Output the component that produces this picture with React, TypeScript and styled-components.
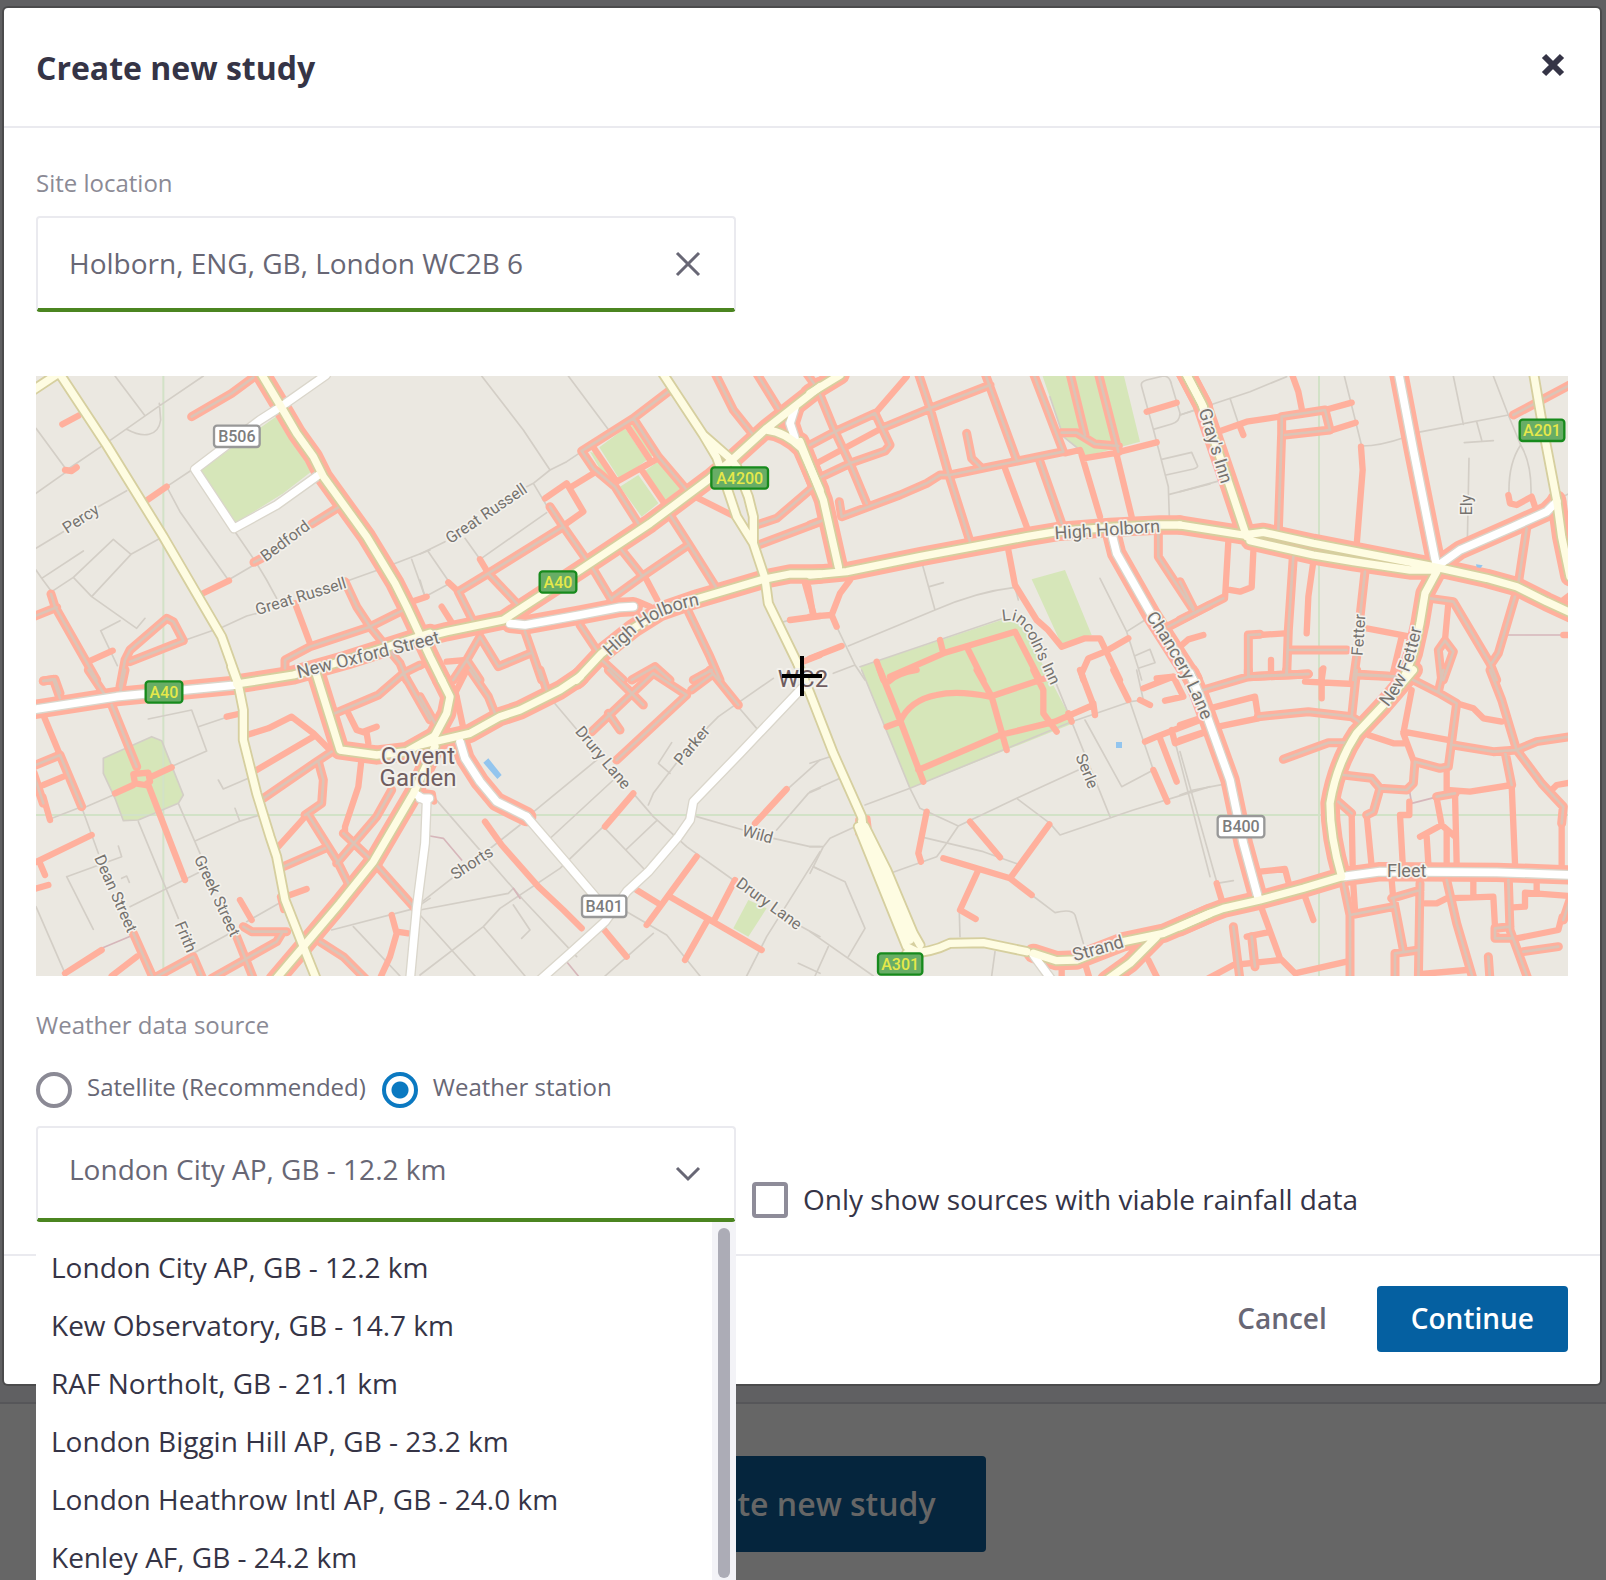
import React, { useState } from "react";
import styled, { createGlobalStyle } from "styled-components";

const colors = {
  ink: "#353446",
  text: "#686775",
  muted: "#8b8a95",
  line: "#eaeaef",
  green: "#4b8520",
  blue: "#0b79c1",
  primary: "#0560a1",
};

const GlobalStyle = createGlobalStyle`
  *, *::before, *::after { box-sizing: border-box; }
  body {
    margin: 0;
    font-family: "Open Sans", "Noto Sans", sans-serif;
    color: ${colors.ink};
  }
  button, input, select { font: inherit; color: inherit; margin: 0; }
`;

/* ---------- page behind the dialog ---------- */

const Screen = styled.div`
  display: grid;
  grid-template-columns: minmax(0, 1fr);
  height: 100vh;
  overflow: hidden;
`;

const Backdrop = styled.div`
  grid-area: 1 / 1;
  display: flex;
  flex-direction: column;
  background: #606062;
`;

const BackdropFooter = styled.div`
  display: flex;
  justify-content: center;
  margin-top: auto;
  padding: 52px 4px 28px 0;
  border-top: 2px solid #565659;
  background: #666666;
`;

const DimmedButton = styled.button`
  && {
    height: 96px;
    padding: 0 50px 2px;
    border: 0;
    border-radius: 4px;
    background: #05253d;
    color: #666666;
    font-size: 32px;
    font-weight: 600;
  }
`;

/* ---------- dialog ---------- */

const Dialog = styled.section`
  grid-area: 1 / 1;
  align-self: start;
  margin: 8px 6px 0 4px;
  border-radius: 4px;
  background: #ffffff;
  box-shadow: 0 0 0 2px #4b4b4c;
`;

const Header = styled.header`
  display: flex;
  align-items: center;
  justify-content: space-between;
  height: 120px;
  padding: 0 32px;
  border-bottom: 2px solid ${colors.line};
`;

const Title = styled.h1`
  margin: 0;
  padding-top: 2px;
  font-size: 32px;
  line-height: 44px;
  font-weight: 700;
`;

const IconButton = styled.button`
  display: flex;
  padding: 0 3px 4px;
  border: 0;
  background: none;
  color: ${colors.ink};
  cursor: pointer;
`;

const Body = styled.div`
  display: flex;
  flex-direction: column;
  padding: 40px 32px 32px;
`;

const fieldLabel = `
  padding: 0;
  color: ${colors.muted};
  font-size: 24px;
  line-height: 30px;
`;

const Label = styled.label`
  ${fieldLabel}
  margin-bottom: 18px;
`;

const FieldBox = styled.div`
  position: relative;
  flex: none;
  width: 700px;
  max-width: 100%;
`;

const control = `
  display: block;
  width: 100%;
  height: 96px;
  border: 2px solid ${colors.line};
  border-bottom: 4px solid ${colors.green};
  border-radius: 4px;
  background: #ffffff;
  color: ${colors.text};
  font-size: 28px;
  outline: none;
`;

const TextInput = styled.input`
  && { ${control} }
  padding: 0 80px 0 31px;
`;

const Select = styled.select`
  && { ${control} }
  appearance: none;
  padding: 0 80px 8px 31px;
`;

const ClearButton = styled.button`
  position: absolute;
  top: 34px;
  right: 34px;
  display: flex;
  padding: 0;
  border: 0;
  background: none;
  color: ${colors.text};
`;

const Chevron = styled.svg`
  position: absolute;
  top: 39px;
  right: 34px;
  pointer-events: none;
`;

const MapFrame = styled.div`
  height: 600px;
  margin: 64px 0 34px;
  overflow: hidden;
  background: #ebe8e1;
  svg { display: block; width: 100%; height: 100%; }
`;

const RadioGroup = styled.fieldset`
  display: flex;
  flex-wrap: wrap;
  gap: 16px;
  margin: 0 0 18px;
  padding: 0;
  border: 0;
`;

const Legend = styled.legend`
  ${fieldLabel}
  margin-bottom: 32px;
`;

const RadioLabel = styled.label`
  display: flex;
  gap: 15px;
  color: ${colors.text};
  font-size: 24px;
  line-height: 30px;
`;

const Radio = styled.input`
  && {
    appearance: none;
    flex: none;
    width: 36px;
    height: 36px;
    border: 4px solid ${colors.muted};
    border-radius: 50%;
    background: #ffffff;
  }
  &&:checked {
    border-color: ${colors.blue};
    background: radial-gradient(circle, ${colors.blue} 8px, #ffffff 9px);
  }
`;

const SourceRow = styled.div`
  display: flex;
  align-items: flex-end;
  gap: 16px;
`;

const CheckLabel = styled.label`
  display: flex;
  gap: 15px;
  padding-bottom: 4px;
  font-size: 28px;
  line-height: 34px;
`;

const Checkbox = styled.input`
  && {
    appearance: none;
    flex: none;
    width: 36px;
    height: 36px;
    border: 4px solid #8e8c99;
    border-radius: 4px;
    background: #ffffff;
  }
  &&:checked { background: ${colors.blue}; }
`;

const Menu = styled.div`
  position: absolute;
  top: 100%;
  left: 0;
  right: 0;
  z-index: 1;
  display: flex;
  height: 358px;
  overflow: hidden;
  background: #ffffff;
`;

const Options = styled.ul`
  flex: 1;
  margin: 0;
  padding: 16px 0 0;
  list-style: none;
`;

const Option = styled.li`
  padding: 0 15px;
  font-size: 28px;
  line-height: 58px;
`;

const ScrollTrack = styled.div`
  width: 24px;
  padding: 6px 6px 2px;
  background: #f3f3f7;
`;

const ScrollThumb = styled.div`
  height: 100%;
  border-radius: 6px;
  background: #acacb6;
`;

const Footer = styled.footer`
  display: flex;
  justify-content: flex-end;
  gap: 16px;
  padding: 30px 32px 32px;
  border-top: 2px solid ${colors.line};
`;

const Button = styled.button<{ $primary?: boolean }>`
  && {
    height: 66px;
    padding: 0 34px 3px;
    border: 0;
    border-radius: 4px;
    background: ${(p) => (p.$primary ? colors.primary : "transparent")};
    color: ${(p) => (p.$primary ? "#ffffff" : colors.text)};
    font-size: 28px;
    font-weight: 600;
  }
`;

/* ---------- map drawing, three units to a pixel ---------- */

type Tile = {
  x: number;
  y: number;
  park?: string;
  minor?: string;
  path?: string;
  street?: string;
  coral?: string;
  yellow?: string;
  yellowLit?: string;
  white?: string;
  whiteLit?: string;
};

const tiles: Tile[] = [
  {
    x: -18,
    y: -18,
    park: "M512,300L745,135L850,300L760,370L615,460Z",
    minor:
      "M255,18L345,137M18,175L110,300L235,215L385,110L520,18M290,178C340,205 385,200 392,150L388,100M18,370L110,305M18,535L100,485M205,410L290,362M410,350L485,300M410,350L450,425L595,630L680,580M615,485L680,580L710,630L740,685M18,600L35,625L160,543M35,625L65,665L130,622L250,508L303,553L185,680L130,622M303,553L385,508M185,680L320,775L345,745M270,752L212,782L262,887M460,812L580,770L650,738L680,730M945,635L1050,598L1200,540M1145,568L1185,680",
    coral:
      "M97,163L145,137M105,300L125,303L140,292M345,395L410,350M515,672L597,632M795,700L840,820M1145,695L1190,680M175,875L248,842",
    street:
      "M485,140L605,70L670,22M845,462L925,412M672,577L695,565M63,672L75,710L200,930M10,740L80,712M270,950L285,870L300,840L410,745L430,755L460,812L300,875M945,635L980,710L1020,770L1110,880L1130,930M765,895L765,870L840,830L1020,770L1140,710M40,933L75,928L90,970",
    yellow: "M10,60L85,10M85,5L230,225L400,500L575,800L625,940",
    yellowLit: "M690,5L750,105L800,190L850,260L880,320L1010,500L1095,640L1130,710L1200,860L1235,930",
    white: "M888,15L750,112L690,150L495,298L612,475L740,405L870,312",
  },
  {
    x: 1152,
    y: -18,
    park: "M538,232L615,175L680,270L600,330ZM600,350L655,315L715,400L665,440ZM672,305L720,270L782,355L735,392ZM628,158L645,158L705,255L690,262ZM510,245L525,250L575,325L550,315Z",
    minor:
      "M185,18L310,180L390,300L340,340L320,350M445,18L570,185M390,300L440,275L485,245M340,340L385,415M0,552L75,515M25,545L90,640L15,680L0,630M135,505L180,568L380,428M1085,757L1110,750",
    coral:
      "M375,385L440,340L490,425L440,460M455,350L520,310M180,568L205,610M85,637L115,665M65,710L100,765M520,232L590,335L710,268M620,165L690,270M665,300L730,395M675,620L712,690M825,380L945,440M80,875L140,870M0,890L40,870M1155,640L1180,730M1110,750L1200,738M1150,875L1200,855M585,692L655,695L690,710",
    street:
      "M745,65L640,145L485,243L520,295L585,350L655,460M640,145L715,260L800,360M390,410L430,470L500,570M430,470L205,610L115,665L160,755M205,610L290,700M515,590L575,690M605,540L665,615M575,685L665,620L805,525M750,435L805,520L890,655M885,10L940,120L1000,195M1010,10L1075,115M1160,10L1185,45M1010,465L1070,445L1175,355M1015,525L1200,455M805,725L870,860L900,930M100,930L140,870L180,800L235,890L330,850M315,785L365,930M140,870L180,930M545,870L610,930M635,930L705,890L750,930M820,930L875,900M480,765L530,840",
    yellow:
      "M725,5L850,195L890,262L930,380L950,440L1000,520L1035,625L1045,700L1135,885M850,195L930,265L950,290L985,380L1000,440L1000,520",
    yellowLit:
      "M0,805L80,785L250,750L480,600L690,460L870,325L930,275L1040,175L1200,50M470,930L545,850L640,775L720,725L820,690L1030,628L1110,612L1200,612M1040,180C1085,185 1120,210 1145,235L1200,360",
    whiteLit: "M270,760L315,765L480,735L600,712L640,710M1125,112L1110,160L1125,205",
  },
  {
    x: 2322,
    y: -18,
    park: "M695,10L940,10L990,215L830,258L760,200ZM665,628L765,600L845,795L755,825ZM150,890L620,735L790,1060L300,1255Z",
    minor:
      "M720,80L760,200L810,240M995,50Q990,35 1010,30L1060,18Q1080,18 1085,45L1110,130Q1110,155 1085,162L1030,178ZM1030,178L1075,350L1078,440M1110,135L1150,122M1055,268L1145,247L1163,288Q1163,293 1150,297L1068,315M1078,373L1200,342M335,575L375,720M358,650L400,638M115,828L375,720Q500,665 615,652L625,690M80,770L135,885L70,910M135,885L165,930M150,890L580,745M870,625L950,785L1005,750M950,785L985,895L995,930M975,857L1020,838L1035,878L985,895",
    coral:
      "M195,130L290,20M20,280L215,175M585,295L650,470M815,255L870,440M920,255L965,440M1010,125L1100,98M765,250L810,240L820,265L910,250L1040,217M595,540L615,645L680,750L712,778L755,830L825,805L870,805L930,930M885,845L955,805M885,845L835,865L815,910L820,930M120,630L90,670L65,735L0,740M65,735L80,770M-5,650L10,740M0,865L95,828M1110,830L1135,808L1180,795M200,875L220,930M240,920L400,850L615,785L690,930M390,810L400,850M475,840L520,930M1040,925L1090,920",
    street:
      "M30,75L75,185M0,225L75,185L195,130L240,225L225,243L120,280L25,325M215,175L360,115L540,45M325,10L360,115L415,310L480,515M525,10L620,270M670,10L760,245L420,315L390,315L350,340L270,375L95,440L88,395M75,185L120,280L170,400M470,190L485,265L510,290M690,275L755,460M780,10L825,195M865,10L925,245M755,188L800,188L855,222L925,228M1045,490L1045,560L1150,720M1075,770L1200,705M0,465L40,450",
    yellowLit:
      "M0,70L90,15M-30,215L0,290L40,390L85,590M0,615L110,605L330,560L650,500L740,485L900,472L1050,465L1110,465M1125,5L1180,110",
    whiteLit: "M905,490L920,550L1025,735L1150,930",
  },
  {
    x: 3432,
    y: -18,
    minor:
      "M0,135L210,65L320,20M150,85L180,175M493,18L545,228Q600,228 680,200M710,188L985,135L940,18M820,18L850,163M890,155L905,210M853,218L940,212M985,135L1022,225Q985,280 987,370M1022,225Q1055,280 1053,370M867,265L862,515M0,365L120,332M1140,385L1165,372",
    path: "M975,795L1170,795",
    coral:
      "M335,10L355,65L365,115M115,185L200,155L300,140M180,170L190,195M435,120L515,98M450,182L527,158M543,230L548,300L530,525M145,515L135,685M140,658L180,665L215,652L220,545M400,575L385,680L380,790M240,795L315,790M273,870L273,915M430,895L425,930M560,775L690,800M665,800L635,925M985,375L990,400L1010,405L1055,380L1065,410M805,700L795,810M1150,795L1170,795M1150,690L1170,675",
    street:
      "M1000,135L1175,42M305,140L305,190L295,480M305,140L435,120L450,180L315,195M340,560L325,780L320,915M330,840L500,840M555,605L540,740M530,860L520,930M750,685L820,695L930,880L950,930M935,880L955,850L1005,680M1015,640L1040,475M205,920L205,795L240,793M205,920L385,912M0,635L40,715M0,750L130,685M530,915L650,920M795,812L775,840L785,930M795,812L820,845L790,930",
    yellow: "M1060,5L1090,180L1130,390",
    yellowLit:
      "M15,5L65,100L150,350L200,500M0,465L190,495L250,487L400,520L760,590L920,625L1010,650L1100,695L1180,732M210,512L400,555L520,575L690,600L760,600M770,605L735,670L720,760L700,850L670,930M1130,390L1145,500L1170,620",
    whiteLit: "M655,5L700,240L770,590M770,590L840,540L1000,470L1100,425L1130,395",
  },
  {
    x: -18,
    y: 882,
    park: "M220,265L365,200L395,212L460,375L445,400L325,450L280,452L255,385L220,310Z",
    minor:
      "M220,265L365,200L395,212L460,375L445,400L325,450L280,452L255,385L220,310ZM355,147L485,120L530,243L430,287M505,170L590,142M158,415L250,375M60,447L155,410M158,420L205,550M325,455L445,745M445,400L510,550M495,513L625,455L690,435M565,330L580,357L655,325M615,415L628,450M110,620L275,560L265,528M110,620L190,778M275,625L290,618L298,637M300,710L505,608M18,710L105,910M490,850L600,790M905,780L1155,715L1200,685M970,770L1110,918M650,755L755,695",
    path: "M215,835L310,795",
    coral:
      "M40,135L90,255M40,345L100,320M40,380L60,450M10,580L185,495M30,580L45,615M10,658L55,645M255,370L310,345M365,320L425,292M310,312L355,308L360,335L345,345L315,340ZM355,345L465,630M590,140L625,132M650,195L715,175L785,140L850,190L900,240M680,300L850,200M745,530L830,435M780,675L830,657M630,690L665,750M105,910L215,840M245,918L320,860M955,130L980,180L1010,190L1015,220M1000,185L1040,170M993,280L985,350L945,470L945,490M1085,735L1100,790L1080,860L1050,925M1100,785L1135,790M750,680L760,720",
    street:
      "M175,0L225,75M285,0L270,70M40,33L70,28L90,85M245,105L320,290M10,288L90,255L155,410M10,310L40,400M700,385L860,275L905,245M865,275L880,330L875,400L825,435M835,435L920,570L960,650M760,590L885,535M920,580L1040,440L1085,360M940,490L1030,575L1155,715M915,130L1045,75L1120,10L1200,150M1120,10L1170,-15M640,770L665,785L770,785M545,925L740,815L755,790M620,800L670,925M310,790L370,925M370,925L490,860L520,930M870,815L940,860L1010,930",
    yellow: "M605,-10L625,45L640,120L640,210L680,370L720,500L740,560L765,690L820,830L860,930",
    yellowLit:
      "M620,42L790,15L950,-30L1200,-110M855,0L930,240L1040,255L1130,245L1210,200M1215,230L1150,370L1030,575L930,700L820,830L735,930",
    white: "M1155,370L1190,395L1185,520L1160,715L1140,930",
    whiteLit: "M-10,122L260,80L620,45",
  },
  {
    x: 1152,
    y: 882,
    park: "M940,775L985,690L1040,715L985,800Z",
    minor:
      "M400,95L480,190M640,370L700,440L800,530L940,630M530,270L335,430M580,330L385,510M550,470L420,595L240,715L190,770L0,915M555,475L675,600M710,452L617,540M0,700L300,465M45,385L310,690L470,860M0,720L265,670L280,655M0,735L165,918M280,705L330,780L305,805M190,770L315,918M755,218L715,280L750,310M685,405L700,370L780,265M860,175L895,140L1060,25M950,105L1010,175M830,440L970,480M1060,505L1170,530L1200,530M1070,480L1165,370L1200,355M1105,355L1200,270M1200,545L1040,800L980,918M1145,770L1200,800M1180,590L1200,600M620,725L740,795L840,918M555,918L700,790M1135,880L1200,910",
    path: "M30,498L70,505L125,570M280,655L300,685M440,875L475,918",
    coral:
      "M640,370L555,470M1100,357L1005,460M195,455L245,525L355,650L430,720L485,775M545,770L620,860M650,660L715,700M830,560L680,765M750,680L1025,840M945,630L880,755M860,755L795,870M110,80L130,175M140,0L100,80M0,365L38,370L42,395",
    street:
      "M565,0L670,105M515,185L700,10L800,75L590,270M565,130L600,180M870,0L955,105M815,60L875,15M150,0L205,80L225,130M360,0L380,60M0,80L45,160",
    yellowLit: "M480,20L420,60L300,120L240,140L150,190L0,225M65,30L90,80L80,130L40,205",
    white: "M320,440L440,580L555,715M360,930L450,850L555,755L620,665L685,605L775,500L810,450L820,395L960,250L1145,55M0,385L28,385",
    whiteLit: "M120,215L135,265L180,335L230,395L320,440",
  },
  {
    x: 2322,
    y: 882,
    minor:
      "M155,0L300,355L785,155M300,355L165,405M300,355L330,415L445,468M445,468L410,520L380,560L245,608M330,500L520,545L625,583M445,468L620,385L805,300M620,385L720,460L750,495L970,420L1150,365L1200,350M0,280L60,260M0,365L90,325M0,530L40,530L60,505L140,468M40,530L0,610M10,590L105,635L165,775L115,860M0,785L190,918M55,830L15,918M730,20L785,155L900,440M785,155L960,95L1000,90L980,0M825,150L935,350L1030,300M960,95L1030,300M1095,215L1200,620M448,730L450,800M665,675L735,728Q785,715 795,735L820,820M555,845L545,918",
    coral:
      "M210,0L270,150L340,335M235,35Q260,10 320,0M230,170L270,155Q300,90 380,75Q440,60 540,80L720,20M500,0L545,80L590,240M325,300L570,195L735,155L850,105L810,0M670,0L700,60L700,130L740,185M775,130L785,155M850,100L855,135M910,0L955,90M990,90L1020,105M1000,55L1090,20L1120,80L1065,92M1005,215L1040,200L1170,150M1085,180L1095,220L1190,185M1050,205L1100,335M1030,300L1072,395M350,425L325,550L333,575M480,455L570,562M718,463L600,625M400,565L600,625L665,675M505,600L450,720L497,747M755,885L755,925M825,880L840,930M1015,870L1045,930M145,450L145,490M172,445L175,470",
    yellow: "M-35,-15L0,70L70,250L155,440L160,480M145,470L290,830L330,850M165,470L230,600L310,790L330,825M155,455L225,630L300,810M290,850Q360,850 420,820L520,818L650,845",
    yellowLit: "M670,850L740,872L800,870L940,815L1060,790L1200,730M1040,800L960,880L890,930",
    white: "M670,855L725,930",
  },
  {
    x: 3432,
    y: 882,
    minor: "M0,245L110,635M0,375L40,360L130,343M110,640L160,632",
    path: "M688,360L695,400L765,382",
    coral:
      "M90,115L225,80L235,145L115,170M0,165L60,145M0,210L75,185M425,0L425,85M375,35L520,42M695,60L670,190L700,270M565,195L640,220L680,220M670,185L815,212M830,100L880,115L910,145L965,155M800,300L800,360L870,365L995,345L1005,580M1110,365L1130,345L1170,338M1145,460L1145,590M515,430L518,590M560,435L575,590M688,395L688,435L660,435L668,580M825,370L830,580M770,385L785,465L720,500M740,500L745,580M785,465L825,500M800,480L800,580M240,605L315,597L325,635M110,640L125,690M375,680L400,750M245,715L300,865L345,910L500,875M85,925L160,885L300,870M200,800L260,788M520,645L525,720M635,630L640,690M735,700L770,700L800,685L940,680L945,770M880,635L880,680M1070,640L1070,665M1170,678L1035,668L1035,710L1000,712M1010,805L1135,780L1145,740M725,912L860,900",
    street:
      "M70,60L205,20L385,12M205,0L205,20M320,0L320,15M235,140L385,125L515,140L530,0M515,140L545,160M310,268L445,218L500,218M530,12L650,20M790,0L775,65M700,30L775,68L830,100L805,290L780,295L705,275L700,340L680,360L600,355M490,315L575,325L600,355L580,425L560,435M930,0L965,90L1010,240L1085,340L1150,410L1145,460M820,225L940,245L1010,240L1070,215L1170,200M975,245L995,345M475,395L515,430M490,640L510,735L510,930M510,735L640,710M720,640L715,930M635,685L720,660M640,685L670,840M645,930L645,850L715,840M800,630L830,760L880,930M985,630L990,780L1045,930M990,770L945,775L945,805L1000,805M1030,845L1135,830M925,860L930,930M160,770L180,930M215,800L225,890M770,380L825,370M1170,690L1150,750",
    yellowLit: "M700,0L610,105L530,190Q470,280 450,400Q450,500 485,620M90,730L130,715L240,690L370,655L485,620M0,770L90,730",
    whiteLit: "M490,620L600,605L950,607L1180,615M30,10L60,80L150,330L190,520L235,685",
  },
];

type LayerKey = Exclude<keyof Tile, "x" | "y">;

const layers: { keys: LayerKey[]; stroke: string; width: number }[] = [
  { keys: ["minor"], stroke: "#d3cec6", width: 5 },
  { keys: ["path"], stroke: "#d6b6ba", width: 5 },
  { keys: ["yellowLit", "whiteLit"], stroke: "#ffb09d", width: 58 },
  { keys: ["coral"], stroke: "#ffb09d", width: 19 },
  { keys: ["street"], stroke: "#ffb09d", width: 27 },
  { keys: ["street"], stroke: "#dcc4b6", width: 8 },
  { keys: ["white", "whiteLit"], stroke: "#dad6cb", width: 31 },
  { keys: ["yellow", "yellowLit"], stroke: "#d6cf9f", width: 33 },
  { keys: ["white", "whiteLit"], stroke: "#ffffff", width: 23 },
  { keys: ["yellow", "yellowLit"], stroke: "#fefce2", width: 22 },
];

const Street = styled.text`
  font-family: Roboto, "Open Sans", sans-serif;
  font-size: 48px;
  fill: #76736f;
  stroke: #f3f1ec;
  stroke-width: 10px;
  stroke-linejoin: round;
  paint-order: stroke;
`;

const Avenue = styled(Street)`
  font-size: 54px;
`;

const Place = styled(Street)`
  font-size: 72px;
  fill: #6f5d60;
  stroke-width: 12px;
  text-anchor: middle;
`;

const ShieldText = styled.text<{ $green: boolean }>`
  font-family: Roboto, "Open Sans", sans-serif;
  font-size: 48px;
  font-weight: 500;
  text-anchor: middle;
  fill: ${(p) => (p.$green ? "#e6e84a" : "#7d7d7d")};
`;

const straightLabels = [
  { text: "Percy", x: 134, y: 427, angle: -33 },
  { text: "Bedford", x: 747, y: 494, angle: -37 },
  { text: "Great Russell", x: 794, y: 660, angle: -17 },
  { text: "Great Russell", x: 1350, y: 412, angle: -34 },
  { text: "Ely", x: 4292, y: 387, angle: -90 },
  { text: "Fetter", x: 3967, y: 777, angle: -86 },
  { text: "Dean Street", x: 240, y: 1552, angle: 66 },
  { text: "Greek Street", x: 544, y: 1559, angle: 65 },
  { text: "Frith", x: 450, y: 1682, angle: 67 },
  { text: "Drury Lane", x: 1702, y: 1144, angle: 50 },
  { text: "Parker", x: 1967, y: 1107, angle: -50 },
  { text: "Wild", x: 2165, y: 1374, angle: 15 },
  { text: "Drury Lane", x: 2200, y: 1582, angle: 36 },
  { text: "Shorts", x: 1307, y: 1460, angle: -33 },
  { text: "Serle", x: 3154, y: 1185, angle: 68 },
];

const avenueLabels = [
  { text: "New Oxford Street", x: 997, y: 839, angle: -14 },
  { text: "High Holborn", x: 3214, y: 464, angle: -4 },
  { text: "Gray's Inn", x: 3536, y: 210, angle: 73 },
  { text: "Strand", x: 3187, y: 1720, angle: -16 },
  { text: "Fleet", x: 4112, y: 1487, angle: 0 },
];

const curvedLabels = [
  { id: "holborn", text: "High Holborn", d: "M1722,842L1800,770Q1880,704 2010,684" },
  { id: "lincoln", text: "Lincoln's Inn", d: "M2900,736Q2945,722 2972,772L3050,940" },
  { id: "chancery", text: "Chancery Lane", d: "M3328,722Q3440,880 3500,1040L3530,1120" },
  { id: "fetter", text: "New Fetter", d: "M4056,994Q4135,905 4165,710" },
];

const shields = [
  { text: "B506", x: 530, y: 145, w: 145 },
  { text: "A4200", x: 2022, y: 270, w: 178 },
  { text: "A40", x: 1507, y: 582, w: 118 },
  { text: "A201", x: 4447, y: 127, w: 142 },
  { text: "A40", x: 325, y: 912, w: 118 },
  { text: "B401", x: 1634, y: 1555, w: 141 },
  { text: "A301", x: 2522, y: 1728, w: 141 },
  { text: "B400", x: 3541, y: 1316, w: 148 },
];

const shift = (t: Tile) => `translate(${t.x} ${t.y})`;

function LocationMap() {
  return (
    <MapFrame>
      <svg viewBox="0 0 4596 1800" preserveAspectRatio="xMidYMid slice" role="img" aria-label="Map of the site location">
        {tiles.map((t, i) => t.park && <path key={i} d={t.park} transform={shift(t)} fill="#d6e6b9" />)}
        <path d="M382,0V1800M3849,0V1800M0,1317H4596" stroke="#d2e2c7" strokeWidth={6} />
        {layers.map((layer, n) => (
          <g key={n} fill="none" stroke={layer.stroke} strokeWidth={layer.width} strokeLinecap="round" strokeLinejoin="round">
            {tiles.map((t, i) =>
              layer.keys.map((key) => t[key] && <path key={key + i} d={t[key] as string} transform={shift(t)} />)
            )}
          </g>
        ))}
        <g fill="#93c5ee">
          <path d="M1342,1160L1357,1147L1397,1197L1384,1209Z" />
          <path d="M3240,1098H3258V1116H3240Z" />
          <path d="M4320,565L4340,568L4334,576L4322,574Z" />
        </g>
        {straightLabels.map((l, i) => (
          <Street key={i} textAnchor="middle" dy={17} transform={`translate(${l.x} ${l.y}) rotate(${l.angle})`}>
            {l.text}
          </Street>
        ))}
        {avenueLabels.map((l) => (
          <Avenue key={l.text} textAnchor="middle" dy={15} transform={`translate(${l.x} ${l.y}) rotate(${l.angle})`}>
            {l.text}
          </Avenue>
        ))}
        {curvedLabels.map((l) => {
          const Kind = l.id === "lincoln" ? Street : Avenue;
          return (
            <React.Fragment key={l.id}>
              <path id={l.id} d={l.d} fill="none" />
              <Kind>
                <textPath href={`#${l.id}`}>{l.text}</textPath>
              </Kind>
            </React.Fragment>
          );
        })}
        <Place x={1146} y={1164}>Covent</Place>
        <Place x={1146} y={1230}>Garden</Place>
        <Place x={2301} y={934}>WC2</Place>
        {shields.map((s, i) => {
          const green = s.text[0] === "A";
          return (
            <g key={i}>
              <rect
                x={s.x + 4}
                y={s.y + 4}
                width={s.w - 8}
                height={64}
                rx={9}
                fill={green ? "#68ad66" : "#ffffff"}
                stroke={green ? "#178a1c" : "#989898"}
                strokeWidth={7}
              />
              <ShieldText $green={green} x={s.x + s.w / 2} y={s.y + 53}>{s.text}</ShieldText>
            </g>
          );
        })}
        <path d="M2238,900H2358M2298,840V960" stroke="#000000" strokeWidth={12} />
      </svg>
    </MapFrame>
  );
}

/* ---------- app ---------- */

const stations = [
  "London City AP, GB - 12.2 km",
  "Kew Observatory, GB - 14.7 km",
  "RAF Northolt, GB - 21.1 km",
  "London Biggin Hill AP, GB - 23.2 km",
  "London Heathrow Intl AP, GB - 24.0 km",
  "Kenley AF, GB - 24.2 km",
];

export default function App() {
  const [location, setLocation] = useState("Holborn, ENG, GB, London WC2B 6");
  const [source, setSource] = useState("station");
  const [station, setStation] = useState(stations[0]);

  return (
    <>
      <GlobalStyle />
      <Screen>
        <Backdrop>
          <BackdropFooter>
            <DimmedButton type="button">Create new study</DimmedButton>
          </BackdropFooter>
        </Backdrop>

        <Dialog role="dialog" aria-labelledby="dialog-title">
          <Header>
            <Title id="dialog-title">Create new study</Title>
            <IconButton type="button" aria-label="Close">
              <svg width="24" height="24" viewBox="0 0 24 24" aria-hidden="true">
                <path d="M3 3L21 21M21 3L3 21" stroke="currentColor" strokeWidth="6" />
              </svg>
            </IconButton>
          </Header>

          <Body>
            <Label htmlFor="location">Site location</Label>
            <FieldBox>
              <TextInput id="location" value={location} onChange={(e) => setLocation(e.target.value)} />
              <ClearButton type="button" aria-label="Clear location" onClick={() => setLocation("")}>
                <svg width="28" height="28" viewBox="0 0 28 28" aria-hidden="true">
                  <path d="M3 3L25 25M25 3L3 25" stroke="currentColor" strokeWidth="3" />
                </svg>
              </ClearButton>
            </FieldBox>

            <LocationMap />

            <RadioGroup>
              <Legend>Weather data source</Legend>
              <RadioLabel>
                <Radio type="radio" name="source" checked={source === "satellite"} onChange={() => setSource("satellite")} />
                Satellite (Recommended)
              </RadioLabel>
              <RadioLabel>
                <Radio type="radio" name="source" checked={source === "station"} onChange={() => setSource("station")} />
                Weather station
              </RadioLabel>
            </RadioGroup>

            <SourceRow>
              <FieldBox>
                <Select aria-label="Weather station" value={station} onChange={(e) => setStation(e.target.value)}>
                  {stations.map((s) => (
                    <option key={s}>{s}</option>
                  ))}
                </Select>
                <Chevron width="28" height="18" viewBox="0 0 28 18" aria-hidden="true">
                  <path d="M3 3L14 14L25 3" fill="none" stroke={colors.text} strokeWidth="3" />
                </Chevron>
                <Menu>
                  <Options role="listbox" aria-label="Weather stations">
                    {stations.map((s) => (
                      <Option key={s} role="option" aria-selected={s === station} onClick={() => setStation(s)}>
                        {s}
                      </Option>
                    ))}
                  </Options>
                  <ScrollTrack>
                    <ScrollThumb />
                  </ScrollTrack>
                </Menu>
              </FieldBox>
              <CheckLabel>
                <Checkbox type="checkbox" />
                Only show sources with viable rainfall data
              </CheckLabel>
            </SourceRow>
          </Body>

          <Footer>
            <Button type="button">Cancel</Button>
            <Button type="button" $primary>Continue</Button>
          </Footer>
        </Dialog>
      </Screen>
    </>
  );
}
